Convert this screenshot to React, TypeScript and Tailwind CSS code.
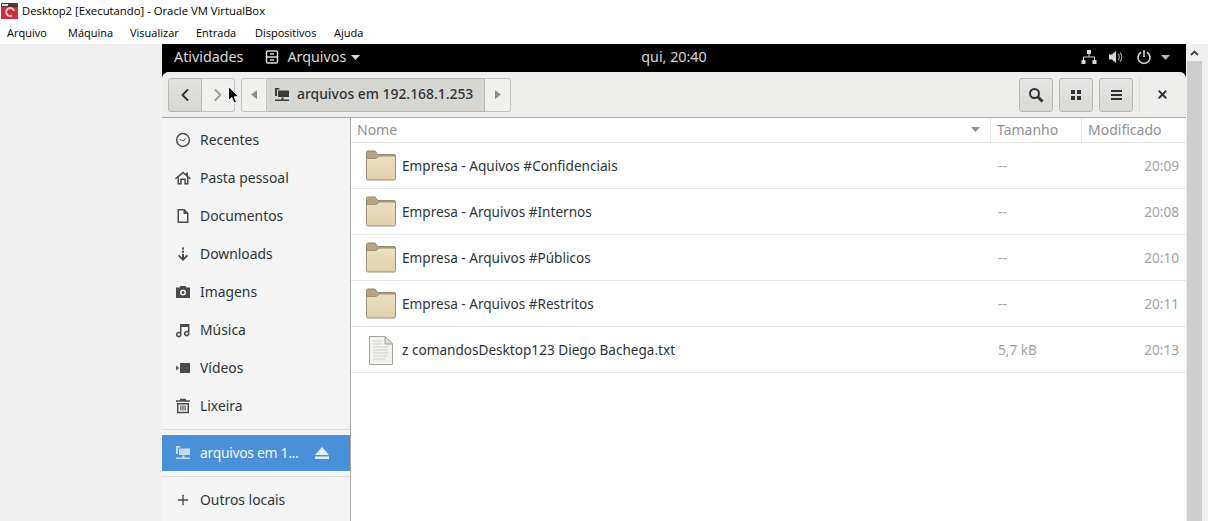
import React, { ReactNode } from "react";
import { ChevronLeft, ChevronRight, X, Plus } from "lucide-react";

const sans = "font-['Noto_Sans','Open_Sans',sans-serif]";

const GreyIcon = ({ children }: { children: ReactNode }) => (
  <svg width="16" height="16" viewBox="0 0 16 16" fill="#4a4c4c" className="shrink-0">
    {children}
  </svg>
);

const places: { name: string; icon: ReactNode }[] = [
  {
    name: "Recentes",
    icon: (
      <GreyIcon>
        <circle cx="8" cy="8" r="6.4" fill="none" stroke="#4a4c4c" strokeWidth="1.5" />
        <path d="M4.8 7.2 8 9l3-2.6" fill="none" stroke="#4a4c4c" strokeWidth="1" />
      </GreyIcon>
    ),
  },
  {
    name: "Pasta pessoal",
    icon: (
      <GreyIcon>
        <path
          fillRule="evenodd"
          d="M8 1.500 0 8.300l.9 1L2.500 8v6.500h4.200V10h2.600v4.500h4.200V8l1.600 1.300.9-1L13 5.800V2.500h-2v1.600zM4 7l4-3.500L12 7v6H10.800V8.500H5.200V13H4z"
        />
      </GreyIcon>
    ),
  },
  {
    name: "Documentos",
    icon: (
      <GreyIcon>
        <path fillRule="evenodd" d="M2.500 1h7l4 4v10h-11zM4 2.500v11h8V6H8.500V2.500z" />
      </GreyIcon>
    ),
  },
  {
    name: "Downloads",
    icon: (
      <GreyIcon>
        <path d="M7 1.500h2v2H7zM7 4.800h2v2H7zM7 8h2v3.500l2.800-2.800 1.200 1.200-5 5-5-5 1.200-1.200L7 11.500z" />
      </GreyIcon>
    ),
  },
  {
    name: "Imagens",
    icon: (
      <GreyIcon>
        <path
          fillRule="evenodd"
          d="M1 3.500h3.500L5.500 2h5l1 1.500H15V14H1zM8 5.500a3 3 0 1 0 0 6 3 3 0 0 0 0-6zM8 7a1.500 1.500 0 1 1 0 3 1.500 1.500 0 0 1 0-3z"
        />
      </GreyIcon>
    ),
  },
  {
    name: "Música",
    icon: (
      <GreyIcon>
        <path
          fillRule="evenodd"
          d="M5 2h9.500v9.500a2.800 2.800 0 1 1-1.500-2.400V5H6.500v7.500a2.800 2.800 0 1 1-1.500-2.400zM3.800 11.200a1.300 1.300 0 1 0 0 2.600 1.300 1.300 0 0 0 0-2.600zM11.800 10.200a1.300 1.300 0 1 0 0 2.600 1.300 1.300 0 0 0 0-2.600z"
        />
      </GreyIcon>
    ),
  },
  {
    name: "Vídeos",
    icon: (
      <GreyIcon>
        <path d="M5 3h10v10H5zM1 5.500 4 8l-3 2.500z" />
      </GreyIcon>
    ),
  },
  {
    name: "Lixeira",
    icon: (
      <GreyIcon>
        <path
          fillRule="evenodd"
          d="M5 .8h6v1.400h4v1.500H1V2.200h4zM2 5h12v10.200H2zM3.500 6.500v7.200h9V6.500zM5.300 7.500h1.200v5H5.300zM7.400 7.500h1.200v5H7.400zM9.500 7.500h1.200v5H9.500z"
        />
      </GreyIcon>
    ),
  },
];

const files = [
  { name: "Empresa - Aquivos #Confidenciais", size: "--", time: "20:09", folder: true },
  { name: "Empresa - Arquivos #Internos", size: "--", time: "20:08", folder: true },
  { name: "Empresa - Arquivos #Públicos", size: "--", time: "20:10", folder: true },
  { name: "Empresa - Arquivos #Restritos", size: "--", time: "20:11", folder: true },
  { name: "z comandosDesktop123 Diego Bachega.txt", size: "5,7 kB", time: "20:13", folder: false },
];

const menuItems = [
  { label: "Arquivo", width: "w-[61px]" },
  { label: "Máquina", width: "w-[62px]" },
  { label: "Visualizar", width: "w-[66px]" },
  { label: "Entrada", width: "w-[59px]" },
  { label: "Dispositivos", width: "w-[79px]" },
  { label: "Ajuda", width: "w-[40px]" },
];

const FolderIcon = () => (
  <svg width="32" height="32" viewBox="0 0 32 32" className="shrink-0">
    <defs>
      <linearGradient id="folderFront" x1="0" y1="0" x2="0" y2="1">
        <stop offset="0" stopColor="#ecdfc4" />
        <stop offset="1" stopColor="#e0cfac" />
      </linearGradient>
    </defs>
    <path
      d="M1.500 2.500a1.500 1.500 0 0 1 1.500-1.500h7l2.500 3.500H29a1.500 1.500 0 0 1 1.500 1.500v6h-29z"
      fill="#b5a583"
      stroke="#94876d"
    />
    <path
      d="M1.500 8.500h9.500l3-2.500H29a1.500 1.500 0 0 1 1.500 1.500v21a1.500 1.500 0 0 1-1.500 1.500H3A1.500 1.500 0 0 1 1.500 28.500z"
      fill="url(#folderFront)"
      stroke="#9b8f77"
    />
  </svg>
);

const TextFileIcon = () => (
  <svg width="32" height="32" viewBox="0 0 32 32" className="shrink-0">
    <path d="M4.500 2.500H20L27.500 10v20.500h-23z" fill="#f2f2ef" stroke="#a5a5a0" />
    <path d="M20 2.500V10h7.500z" fill="#dcdcd8" stroke="#a5a5a0" />
    <path d="M8 7h9M8 10h9M8 13h15M8 16h15M8 19h15M8 22h15M8 25h12" stroke="#cfcfca" strokeWidth="1" />
  </svg>
);

const NetworkFolder = ({ color }: { color: string }) => (
  <svg width="16" height="16" viewBox="0 0 16 16" fill={color} className="shrink-0">
    <path d="M1 1h4l1 1.500h-3V9H1zM4 3.500h11V10H4zM7.500 10.500h2V12.500H15V14H1v-1.500h6.500z" />
  </svg>
);

const Arrow = () => (
  <svg width="9" height="5" viewBox="0 0 9 5" fill="currentColor" className="shrink-0">
    <path d="M0 0h9L4.500 5z" />
  </svg>
);

const ToolButton = ({ children }: { children: ReactNode }) => (
  <div className="flex h-[34px] w-[34px] items-center justify-center rounded-[3px] border border-[#b6b6b3] bg-gradient-to-b from-[#e6e6e4] to-[#d8d8d5] text-[#2e3436]">
    {children}
  </div>
);

export default function App() {
  return (
    <div className={`${sans} relative flex h-[521px] w-[1208px] flex-col overflow-hidden bg-[#f0f0f0]`}>
      {/* VirtualBox window chrome */}
      <div className="flex h-[22px] items-center bg-white pl-[1px] text-black">
        <svg width="18" height="18" viewBox="0 0 18 18" className="mr-[3px] shrink-0">
          <rect x="0" y="1" width="17" height="16" rx="1" fill="#4a3a3e" />
          <rect x="0" y="5" width="17" height="12" fill="#cf2c3c" />
          <path d="M11 13.500a4 4 0 1 1 2-4.500" fill="none" stroke="#f6c3bd" strokeWidth="2" />
          <rect x="1" y="2" width="6" height="2" fill="#dcdcdc" />
        </svg>
        <span className="font-['Open_Sans',sans-serif] text-[11.3px]">Desktop2 [Executando] - Oracle VM VirtualBox</span>
      </div>
      <div className="flex h-[22px] items-center bg-white pl-[7px] pt-[1px] font-['Open_Sans',sans-serif] text-[11px] text-black">
        {menuItems.map((item) => (
          <span key={item.label} className={item.width}>
            {item.label}
          </span>
        ))}
      </div>

      <div className="flex min-h-0 flex-1">
        <div className="w-[162px] shrink-0" />

        {/* guest screen */}
        <div className="flex w-[1024px] shrink-0 flex-col bg-black">
          <div className="grid h-[28px] shrink-0 grid-cols-[1fr_auto_1fr] items-center pb-[2px] text-[14.300px] text-[#dadad8]">
            <div className="flex items-center pl-[12px]">
              <span>Atividades</span>
              <svg width="14" height="14" viewBox="0 0 14 14" className="ml-[22px] mr-[8px]" fill="none" stroke="#d8d8d6" strokeWidth="1.500">
                <rect x="1.500" y="1" width="11" height="12" rx="1" />
                <path d="M1.500 7h11M5 4h4M5 10h4" />
              </svg>
              <span>Arquivos</span>
              <span className="ml-[5px]">
                <Arrow />
              </span>
            </div>
            <span>qui, 20:40</span>
            <div className="flex items-center justify-end gap-[12px] pr-[16px]">
              <svg width="16" height="16" viewBox="0 0 16 16" fill="#d8d8d6" className="mr-[-1px]">
                <path d="M6 1h4v4H8.500v2.500H14V11h1.500v4h-4v-4H13V8.500H3V11h1.500v4h-4v-4H2V7.500h5.500V5H6z" />
              </svg>
              <svg width="16" height="16" viewBox="0 0 16 16" fill="#d8d8d6">
                <path d="M1 5.500h3L8 2v12L4 10.500H1z" />
                <path d="M10 5a4 4 0 0 1 0 6M12 3.500a6.500 6.500 0 0 1 0 9" fill="none" stroke="#9c9c9a" strokeWidth="1.200" />
              </svg>
              <svg width="16" height="16" viewBox="0 0 16 16" fill="none" stroke="#d8d8d6" strokeWidth="1.600">
                <path d="M5 3.200a6 6 0 1 0 6 0M8 1v7" />
              </svg>
              <span className="-ml-[3px] text-[#b8b8b6]">
                <Arrow />
              </span>
            </div>
          </div>

          {/* Nautilus window */}
          <div className="flex min-h-0 flex-1 flex-col overflow-hidden rounded-t-[7px] bg-white">
            <div className="flex h-[46px] shrink-0 items-center border-b border-[#a8a8a5] bg-[#ededeb] pl-[6px]">
              <div className="flex">
                <div className="flex h-[34px] w-[34px] items-center justify-center rounded-l-[3px] border border-[#b6b6b3] bg-gradient-to-b from-[#e2e2e0] to-[#d6d6d3] text-[#2e3436]">
                  <ChevronLeft size={20} strokeWidth={2.2} />
                </div>
                <div className="flex h-[34px] w-[33px] items-center justify-center rounded-r-[3px] border border-l-0 border-[#c4c4c1] bg-[#f0f0ee] text-[#9a9c9c]">
                  <ChevronRight size={20} strokeWidth={2.2} />
                </div>
              </div>

              <div className="ml-[6px] flex h-[34px] items-center text-[#2e3436]">
                <div className="flex h-full w-[26px] items-center justify-center rounded-l-[3px] border border-[#c4c4c1] bg-[#f0f0ee] text-[#8f9191]">
                  <svg width="6" height="9" viewBox="0 0 6 9" fill="currentColor">
                    <path d="M6 0v9L0 4.500z" />
                  </svg>
                </div>
                <div className="flex h-full w-[218px] items-center gap-[7px] border-y border-r border-[#b6b6b3] bg-[#d6d6d3] pl-[7px] text-[13.900px] font-medium">
                  <NetworkFolder color="#3a3c3c" />
                  <span>arquivos em 192.168.1.253</span>
                </div>
                <div className="flex h-full w-[26px] items-center justify-center rounded-r-[3px] border border-l-0 border-[#c4c4c1] bg-[#f0f0ee] text-[#8f9191]">
                  <svg width="6" height="9" viewBox="0 0 6 9" fill="currentColor">
                    <path d="M0 0v9l6-4.500z" />
                  </svg>
                </div>
              </div>

              <div className="ml-auto flex items-center gap-[6px] pr-[7px]">
                <ToolButton>
                  <svg width="16" height="16" viewBox="0 0 16 16" fill="none" stroke="currentColor">
                    <circle cx="6.500" cy="6.500" r="4.500" strokeWidth="2" />
                    <path d="M10 10l4.500 4.500" strokeWidth="2.800" />
                  </svg>
                </ToolButton>
                <ToolButton>
                  <svg width="10" height="10" viewBox="0 0 10 10" fill="currentColor">
                    <path d="M0 0h4v4H0zM6 0h4v4H6zM0 6h4v4H0zM6 6h4v4H6z" />
                  </svg>
                </ToolButton>
                <ToolButton>
                  <svg width="11" height="10" viewBox="0 0 11 10" fill="currentColor">
                    <path d="M0 0h11v2H0zM0 4h11v2H0zM0 8h11v2H0z" />
                  </svg>
                </ToolButton>
                <div className="h-[34px] w-px bg-[#dcdcda]" />
                <div className="flex h-[34px] w-[33px] items-center justify-center text-[#2e3436]">
                  <X size={13} strokeWidth={3.400} />
                </div>
              </div>
            </div>

            <div className="flex min-h-0 flex-1">
              {/* sidebar */}
              <div className="w-[189px] shrink-0 border-r border-[#a8a8a5] bg-[#f4f4f4] text-[13.900px] text-[#2e3436]">
                <div className="flex flex-col pt-[3px]">
                  {places.map((place) => (
                    <div key={place.name} className="flex h-[38px] items-center gap-[9px] pl-[13px]">
                      {place.icon}
                      <span>{place.name}</span>
                    </div>
                  ))}
                </div>
                <div className="mt-[4px] border-t border-[#dcdcda]" />
                <div className="mt-[5px] flex h-[36px] items-center gap-[9px] bg-[#4a90d9] pl-[13px] text-[#eef5fc]">
                  <NetworkFolder color="#c5dcf3" />
                  <span className="w-[100px] whitespace-nowrap tracking-[-0.3px]">arquivos em 1...</span>
                  <svg width="14" height="12" viewBox="0 0 14 12" fill="#e3eefa" className="ml-[6px]">
                    <path d="M7 0l7 8H0zM0 9.500h14V12H0z" />
                  </svg>
                </div>
                <div className="mt-[5px] border-t border-[#dcdcda]" />
                <div className="flex h-[46px] items-center gap-[9px] pl-[13px]">
                  <Plus size={16} strokeWidth={2} className="shrink-0 text-[#4a4c4c]" />
                  <span>Outros locais</span>
                </div>
              </div>

              {/* file list */}
              <div className="min-w-0 flex-1 text-[13.600px]">
                <div className="grid h-[25px] grid-cols-[639px_91px_1fr] items-center border-b border-[#e6e6e4] text-[14px] text-[#8f9191]">
                  <div className="flex items-center justify-between pb-[2px] pl-[6px] pr-[10px]">
                    <span>Nome</span>
                    <Arrow />
                  </div>
                  <div className="h-full border-l border-[#e6e6e4] pl-[6px] leading-[23px]">Tamanho</div>
                  <div className="h-full border-l border-[#e6e6e4] pl-[6px] leading-[23px]">Modificado</div>
                </div>
                {files.map((file) => (
                  <div
                    key={file.name}
                    className="grid h-[46px] grid-cols-[639px_91px_1fr] items-center border-b border-[#e6e6e4]"
                  >
                    <div className="flex items-center gap-[5px] pl-[14px] text-[#2e3436]">
                      {file.folder ? <FolderIcon /> : <TextFileIcon />}
                      <span className="pt-[2px]">{file.name}</span>
                    </div>
                    <span className="pl-[8px] pt-[2px] text-[#a0a2a2]">{file.size}</span>
                    <span className="pr-[7px] pt-[2px] text-right text-[#a0a2a2]">{file.time}</span>
                  </div>
                ))}
              </div>
            </div>
          </div>
        </div>

        {/* host scrollbar */}
        <div className="ml-[1px] flex w-[15px] shrink-0 flex-col bg-[#f0f0f0]">
          <div className="flex h-[17px] shrink-0 items-center justify-center text-[#404040]">
            <svg width="9" height="6" viewBox="0 0 9 6" fill="none" stroke="currentColor" strokeWidth="1.800">
              <path d="M1 5l3.500-3.500L8 5" />
            </svg>
          </div>
          <div className="flex-1 bg-[#cdcdcd]" />
        </div>
      </div>

      {/* mouse pointer over the guest window */}
      <svg width="12" height="18" viewBox="0 0 12 18" className="absolute left-[228px] top-[86px]">
        <path d="M.5.500v14l3.300-3 2.200 5.500 2.500-1-2.300-5.200h4.500z" fill="#000" stroke="#fff" strokeWidth="1" />
      </svg>
    </div>
  );
}
